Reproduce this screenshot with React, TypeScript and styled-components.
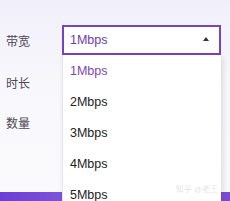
import styled, { createGlobalStyle } from "styled-components";

const Global = createGlobalStyle`
  html, body { margin: 0; padding: 0; }
  body {
    font-family: "Liberation Sans", "Noto Sans CJK SC", sans-serif;
    background: #f6f5fa;
  }
`;

const Page = styled.div`
  position: relative;
  width: 230px;
  height: 201px;
  overflow: hidden;
  background: linear-gradient(180deg, #f1eff9 0%, #f8f7fc 40%, #fafafc 100%);
`;

const Form = styled.div`
  display: flex;
  flex-direction: column;
  padding: 25px 0 0 6px;
`;

const Row = styled.div<{ $h: number; $top?: number }>`
  display: flex;
  align-items: center;
  height: ${(p) => p.$h}px;
  margin-top: ${(p) => p.$top ?? 0}px;
`;

const Label = styled.div`
  width: 56px;
  font-size: 12px;
  color: #4a4a55;
`;

const SelectWrap = styled.div`
  position: relative;
  width: 159px;
`;

const SelectBox = styled.div`
  box-sizing: border-box;
  height: 30px;
  border: 2px solid #7443c6;
  background: #fff;
  display: flex;
  align-items: center;
  justify-content: space-between;
  padding: 0 10px 0 6px;
  font-size: 12.5px;
  color: #6d3ab4;
`;

const Arrow = styled.span`
  width: 0;
  height: 0;
  border-left: 3.5px solid transparent;
  border-right: 3.5px solid transparent;
  border-bottom: 4px solid #333;
  margin-top: -2px;
`;

const Dropdown = styled.ul`
  position: absolute;
  left: 0;
  top: 30px;
  width: 158px;
  margin: 0;
  padding: 0;
  list-style: none;
  background: #fff;
  border-left: 1px solid #e4e4ea;
  box-shadow: 2px 2px 6px rgba(0, 0, 0, 0.12);
  z-index: 2;
`;

const Option = styled.li<{ $active?: boolean }>`
  height: 31px;
  display: flex;
  align-items: center;
  padding-left: 7px;
  font-size: 12.5px;
  color: ${(p) => (p.$active ? "#7a46bd" : "#222")};
`;

const BottomBar = styled.div`
  position: absolute;
  left: 0;
  right: 0;
  bottom: 0;
  height: 9px;
  background: linear-gradient(90deg, #6a3ed6 0%, #8a62de 45%, #a68ae4 60%, #7a4bd8 100%);
`;

const Watermark = styled.div`
  position: absolute;
  right: 12px;
  bottom: 7px;
  font-size: 8px;
  color: rgba(170, 170, 180, 0.35);
  z-index: 3;
`;

const options = ["1Mbps", "2Mbps", "3Mbps", "4Mbps", "5Mbps"];

export default function App() {
  return (
    <Page>
      <Global />
      <Form>
        <Row $h={30}>
          <Label>带宽</Label>
          <SelectWrap>
            <SelectBox>
              <span>1Mbps</span>
              <Arrow />
            </SelectBox>
            <Dropdown>
              {options.map((o, i) => (
                <Option key={o} $active={i === 0}>
                  {o}
                </Option>
              ))}
            </Dropdown>
          </SelectWrap>
        </Row>
        <Row $h={20} $top={17}>
          <Label>时长</Label>
        </Row>
        <Row $h={20} $top={20}>
          <Label>数量</Label>
        </Row>
      </Form>
      <BottomBar />
      <Watermark>知乎 @老王</Watermark>
    </Page>
  );
}
